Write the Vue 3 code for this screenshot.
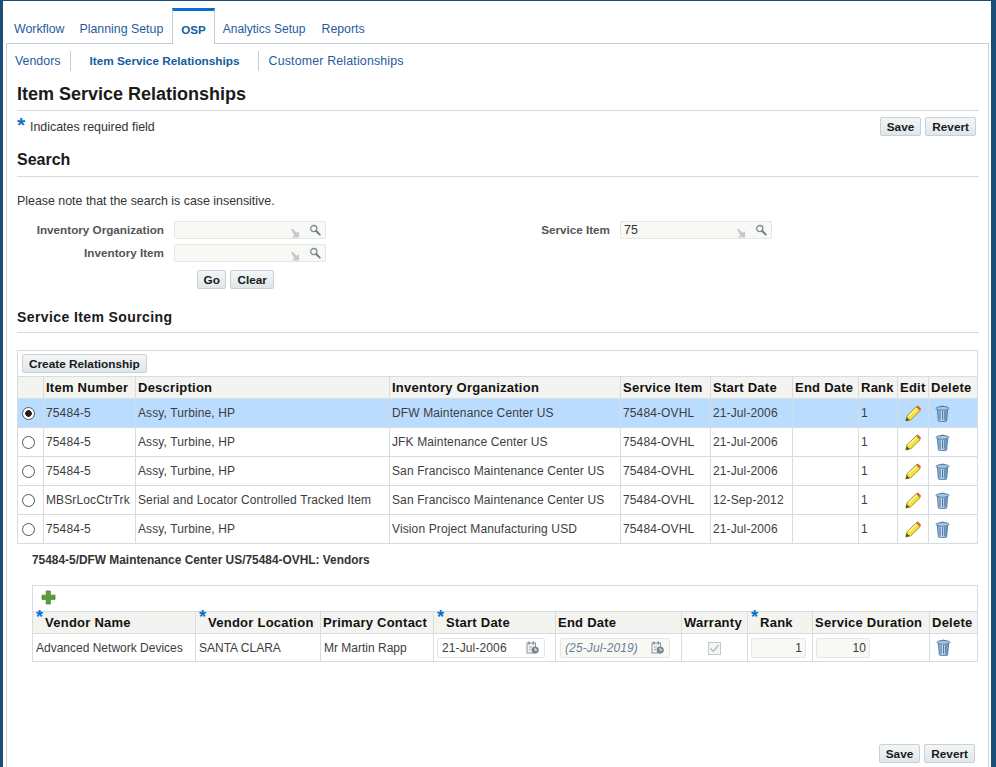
<script setup>
const tabs = [
  { label: 'Workflow' },
  { label: 'Planning Setup' },
  { label: 'OSP', active: true },
  { label: 'Analytics Setup' },
  { label: 'Reports' }
]
const subs = [
  { label: 'Vendors', cls: 'sub-a' },
  { label: 'Item Service Relationships', cls: 'sub-b' },
  { label: 'Customer Relationships', cls: 'sub-c' }
]
const cols1 = [26, 92, 254, 231, 90, 82, 66, 39, 31, 49]
const heads1 = ['', 'Item Number', 'Description', 'Inventory Organization', 'Service Item', 'Start Date', 'End Date', 'Rank', 'Edit', 'Delete']
const rows1 = [
  ['75484-5', 'Assy, Turbine, HP', 'DFW Maintenance Center US', '21-Jul-2006', true],
  ['75484-5', 'Assy, Turbine, HP', 'JFK Maintenance Center US', '21-Jul-2006', false],
  ['75484-5', 'Assy, Turbine, HP', 'San Francisco Maintenance Center US', '21-Jul-2006', false],
  ['MBSrLocCtrTrk', 'Serial and Locator Controlled Tracked Item', 'San Francisco Maintenance Center US', '12-Sep-2012', false],
  ['75484-5', 'Assy, Turbine, HP', 'Vision Project Manufacturing USD', '21-Jul-2006', false]
]
const cols2 = [163, 125, 113, 122, 126, 66, 65, 117, 48]
</script>

<template>
  <div class="page">
    <svg class="defs" width="0" height="0" aria-hidden="true">
      <defs>
        <linearGradient id="cyl" x1="0" x2="1" y1="0" y2="0">
          <stop offset="0" stop-color="#7fa6cc" />
          <stop offset=".45" stop-color="#d3e4f3" />
          <stop offset="1" stop-color="#5f8ab5" />
        </linearGradient>
        <symbol id="pencil" viewBox="0 0 16 17">
          <path d="M.8 16 2 10.8 11.2 1.8 15.2 5.6 5.8 14.8Z" fill="#f7e23c" stroke="#8f7a12" stroke-width=".8" stroke-linejoin="round" />
          <path d="M3.4 11 12 3" stroke="#fff8a8" stroke-width="1.4" fill="none" />
          <path d="M.8 16 1.7 12.2 4.6 15Z" fill="#4c4a3e" />
          <path d="M11.2 1.8 12.8 .5 16 3.8 15.2 5.6Z" fill="#e0532f" />
        </symbol>
        <symbol id="trash" viewBox="0 0 15 17">
          <path d="M2.4 4.5 3.3 15.6Q3.4 16.4 4.2 16.4H10.8Q11.6 16.4 11.7 15.6L12.6 4.5Z" fill="url(#cyl)" stroke="#3f6d9b" stroke-width=".8" />
          <path d="M5.1 6.2V14.8M7.5 6.2V14.8M9.9 6.2V14.8" stroke="#3f6d9b" stroke-width=".9" />
          <ellipse cx="7.5" cy="3.4" rx="6.4" ry="1.9" fill="#a9c6e0" stroke="#3f6d9b" stroke-width=".8" />
          <path d="M5.6 1.7Q7.5 .2 9.4 1.7" fill="none" stroke="#3f6d9b" stroke-width=".8" />
        </symbol>
        <symbol id="mag" viewBox="0 0 12 12">
          <circle cx="4.8" cy="4.6" r="3.1" fill="#f4f7f9" stroke="#7f8c95" stroke-width="1.3" />
          <path d="M7.2 7 10.8 10.6" stroke="#6f7c85" stroke-width="1.9" stroke-linecap="round" />
        </symbol>
        <symbol id="lov" viewBox="0 0 10 10">
          <path d="M1 1.5 2.4 .5 7 5 8 3.5 9 3.5 9 9.5 2.5 9.5 2.5 8.5 4.5 7.5Z" fill="#c3c9cc" />
        </symbol>
        <symbol id="cal" viewBox="0 0 13 13">
          <rect x="1" y="2" width="8.5" height="10" fill="#eef0f1" stroke="#8f989e" />
          <path d="M3 .5V3.5M7.4 .5V3.5" stroke="#6f7a82" stroke-width="1.2" />
          <path d="M3 6H6M3 8.5H5" stroke="#a5adb2" />
          <circle cx="9.2" cy="9" r="3.6" fill="#7b878f" />
          <path d="M9.2 7.2V9.2H11" stroke="#fff" fill="none" />
        </symbol>
      </defs>
    </svg>

    <div class="shell">
      <nav class="tabs">
        <a v-for="t in tabs" :key="t.label" class="tab" :class="{ on: t.active }">{{ t.label }}</a>
      </nav>

      <main class="panel">
        <nav class="subnav">
          <a v-for="s in subs" :key="s.label" :class="s.cls">{{ s.label }}</a>
        </nav>

        <h1>Item Service Relationships</h1>

        <div class="req-row">
          <p class="req"><span class="star">*</span><span>Indicates required field</span></p>
          <div class="btns">
            <button>Save</button>
            <button>Revert</button>
          </div>
        </div>

        <h2>Search</h2>
        <p class="note">Please note that the search is case insensitive.</p>

        <div class="form">
          <div class="form-col">
            <div class="field">
              <label>Inventory Organization</label>
              <div class="lov">
                <span></span>
                <svg class="i-lov"><use href="#lov" /></svg>
                <svg class="i-mag"><use href="#mag" /></svg>
              </div>
            </div>
            <div class="field">
              <label>Inventory Item</label>
              <div class="lov">
                <span></span>
                <svg class="i-lov"><use href="#lov" /></svg>
                <svg class="i-mag"><use href="#mag" /></svg>
              </div>
            </div>
            <div class="form-btns">
              <button class="go">Go</button>
              <button>Clear</button>
            </div>
          </div>
          <div class="form-col second">
            <div class="field">
              <label class="short">Service Item</label>
              <div class="lov">
                <span>75</span>
                <svg class="i-lov"><use href="#lov" /></svg>
                <svg class="i-mag"><use href="#mag" /></svg>
              </div>
            </div>
          </div>
        </div>

        <h3>Service Item Sourcing</h3>

        <div class="tbl-box">
          <div class="toolbar"><button>Create Relationship</button></div>
          <table>
            <colgroup>
              <col v-for="(c, i) in cols1" :key="i" :style="{ width: c + 'px' }" />
            </colgroup>
            <thead>
              <tr><th v-for="(h, i) in heads1" :key="i">{{ h }}</th></tr>
            </thead>
            <tbody>
              <tr v-for="(r, i) in rows1" :key="i" :class="{ sel: r[4] }">
                <td class="c-radio"><span class="radio" :class="{ checked: r[4] }"></span></td>
                <td>{{ r[0] }}</td>
                <td>{{ r[1] }}</td>
                <td>{{ r[2] }}</td>
                <td>75484-OVHL</td>
                <td>{{ r[3] }}</td>
                <td></td>
                <td>1</td>
                <td class="c"><svg class="i-pencil"><use href="#pencil" /></svg></td>
                <td class="c-del"><svg class="i-trash"><use href="#trash" /></svg></td>
              </tr>
            </tbody>
          </table>
        </div>

        <h4>75484-5/DFW Maintenance Center US/75484-OVHL: Vendors</h4>

        <div class="tbl-box sub">
          <div class="toolbar plus">
            <svg width="15" height="15" viewBox="0 0 16 16"><path d="M5.5 1H10V5.5H15V10H10V15H5.5V10H1V5.5H5.5Z" fill="#5a9e3c" stroke="#3f7f2a" stroke-width=".7" /></svg>
          </div>
          <table class="t2">
            <colgroup>
              <col v-for="(c, i) in cols2" :key="i" :style="{ width: c + 'px' }" />
            </colgroup>
            <thead>
              <tr>
                <th><span class="hstar">*</span>Vendor Name</th>
                <th><span class="hstar">*</span>Vendor Location</th>
                <th>Primary Contact</th>
                <th><span class="hstar">*</span>Start Date</th>
                <th>End Date</th>
                <th>Warranty</th>
                <th><span class="hstar">*</span>Rank</th>
                <th>Service Duration</th>
                <th>Delete</th>
              </tr>
            </thead>
            <tbody>
              <tr>
                <td>Advanced Network Devices</td>
                <td>SANTA CLARA</td>
                <td>Mr Martin Rapp</td>
                <td><div class="date"><span>21-Jul-2006</span><svg class="i-cal"><use href="#cal" /></svg></div></td>
                <td><div class="date dis"><span>(25-Jul-2019)</span><svg class="i-cal"><use href="#cal" /></svg></div></td>
                <td class="c">
                  <svg width="13" height="13" viewBox="0 0 13 13" class="chk"><rect x=".5" y=".5" width="12" height="12" fill="#f4f5f5" stroke="#c3c9cc" /><path d="M2.5 6.5 5.3 9.5 10.5 3" fill="none" stroke="#b4bbbf" stroke-width="1.3" /></svg>
                </td>
                <td><div class="num w-rank">1</div></td>
                <td><div class="num w-dur">10</div></td>
                <td class="c-del"><svg class="i-trash"><use href="#trash" /></svg></td>
              </tr>
            </tbody>
          </table>
        </div>

        <div class="foot btns">
          <button>Save</button>
          <button>Revert</button>
        </div>
      </main>
    </div>
  </div>
</template>

<style scoped>
.page {
  width: 996px;
  height: 767px;
  box-sizing: border-box;
  padding: 1px 5px 0 3px;
  background: #1b4f78;
  overflow: hidden;
  font-family: "Liberation Sans", Arial, sans-serif;
  font-size: 12.4px;
  color: #333;
}
.defs { position: absolute; }
.shell {
  background: #fff;
  height: 766px;
  padding: 7px 2px 0 3px;
  box-sizing: border-box;
}
.tabs { display: flex; height: 35px; font-size: 12.35px; }
.tab {
  padding: 14px 8px 0;
  color: #1f5c9e;
  line-height: 14px;
  box-sizing: border-box;
  position: relative;
}
.tab:first-child { padding-right: 7px; }
.tab:nth-child(2) { padding-right: 9px; }
.tab.on {
  font-weight: bold;
  font-size: 11.6px;
  color: #145c9e;
  border: 1px solid #c5ced4;
  border-top: 3px solid #0572ce;
  border-bottom: 0;
  height: 36px;
  padding: 12px 8px 0;
  background: #fff;
  z-index: 1;
}
.tab.on + .tab { font-size: 12px; }
.panel {
  border: 1px solid #c5ced4;
  border-bottom: 0;
  height: 724px;
  padding: 0 9px 0 10px;
  box-sizing: border-box;
}
.subnav { display: flex; height: 31px; align-items: flex-start; color: #1f5c9e; margin-left: -2px; }
.subnav a { line-height: 20px; height: 20px; margin-top: 7px; }
.sub-a { padding-right: 10px; border-right: 1px solid #c5ced4; }
.sub-b { padding: 0 18px; border-right: 1px solid #c5ced4; font-weight: bold; color: #145c9e; font-size: 11.8px; }
.sub-c { padding-left: 10px; letter-spacing: .16px; }
h1 {
  margin: 8px 0 0;
  font-size: 18px;
  line-height: 23px;
  height: 27px;
  color: #1a1a1a;
  border-bottom: 1px solid #d6dcdf;
}
.req-row { display: flex; justify-content: space-between; height: 39px; }
.req { margin: 4px 0 0; display: flex; }
.star { color: #0572ce; font-size: 21px; line-height: 20px; font-weight: bold; width: 13px; }
.req span:last-child { margin-top: 5px; line-height: 14px; }
.btns { display: flex; gap: 4px; padding: 6px 3px 0 0; }
button {
  font: bold 11.8px "Liberation Sans", Arial, sans-serif;
  color: #1a1a1a;
  height: 19px;
  padding: 0 6px;
  border: 1px solid #c9d1d6;
  border-radius: 2px;
  background: linear-gradient(#f4f6f7, #dfe6ea);
}
button.go { padding: 0 5.5px; }
h2 {
  margin: 0;
  font-size: 16px;
  line-height: 20px;
  height: 26px;
  color: #1a1a1a;
  border-bottom: 1px solid #d6dcdf;
}
.note { margin: 17px 0 0; line-height: 14px; }
.form { display: flex; margin-top: 13px; height: 76px; }
.form-col { flex: none; width: 523px; }
.form-col.second { width: 232px; }
.field { display: flex; align-items: center; height: 18px; margin-bottom: 5px; }
.field label {
  width: 147px;
  flex: none;
  text-align: right;
  font-weight: bold;
  color: #555;
  margin: -2px 10px 0 0;
  font-size: 11.7px;
  white-space: nowrap;
}
.field label.short { width: 70px; }
.lov {
  width: 152px;
  height: 18px;
  flex: none;
  box-sizing: border-box;
  border: 1px solid #e3e7e9;
  border-radius: 2px;
  background: #f8f8f4;
  display: flex;
  align-items: center;
  position: relative;
  padding-left: 3px;
}
.lov span { line-height: 16px; }
.i-lov { position: absolute; left: 115px; top: 6px; width: 10px; height: 10px; }
.i-mag { position: absolute; left: 134px; top: 2px; width: 12px; height: 12px; }
.form-btns { display: flex; gap: 4px; margin: 8px 0 0 180px; }
h3 {
  margin: 12px 0 0;
  font-size: 14px;
  line-height: 16px;
  height: 23px;
  color: #1a1a1a;
  border-bottom: 1px solid #d6dcdf;
  letter-spacing: .4px;
}
.tbl-box { margin-top: 17px; border: 1px solid #d6dcdf; border-bottom: 0; width: 961px; box-sizing: border-box; }
.toolbar { height: 25px; padding: 3px 0 0 4px; box-sizing: border-box; }
table { border-collapse: collapse; table-layout: fixed; width: 960px; margin-left: -1px; }
th, td {
  border: 1px solid #d6dcdf;
  padding: 0 2px;
  text-align: left;
  white-space: nowrap;
}
th {
  height: 21px;
  background: #f3f3ef;
  font-size: 13px;
  font-weight: bold;
  color: #111;
  letter-spacing: .25px;
}
td { height: 28px; font-size: 12px; letter-spacing: .12px; color: #3d3d3d; }
tr.sel td { background: #b9dcff; }
td.c { text-align: center; padding: 0; }
td.c-radio { padding: 0 0 0 4px; }
td.c-del { padding: 0 0 0 6px; }
.radio {
  display: inline-block;
  width: 13px;
  height: 13px;
  box-sizing: border-box;
  border: 1px solid #555;
  border-radius: 50%;
  background: #fff;
  vertical-align: middle;
}
.radio.checked { background: radial-gradient(circle, #222 0 3px, #fff 3.6px); }
.i-pencil { width: 16px; height: 17px; vertical-align: middle; }
.i-trash { width: 15px; height: 17px; vertical-align: middle; }
h4 {
  margin: 9px 0 0 15px;
  font-size: 11.9px;
  line-height: 14px;
  color: #333;
}
.tbl-box.sub { margin: 18px 0 0 15px; width: 946px; }
.plus { padding: 4px 0 0 8px; }
.t2 { width: 945px; }
.t2 td { height: 27px; padding-left: 3px; letter-spacing: 0; }
.t2 th { height: 21px; }
.t2 td.c { padding: 0; }
.t2 td.c-del { padding: 0 0 0 6px; }
.hstar {
  color: #0572ce;
  font-size: 18px;
  line-height: 0;
  vertical-align: 4px;
  margin: 0 2px 0 1px;
  letter-spacing: 0;
}
.date, .num {
  height: 20px;
  box-sizing: border-box;
  border: 1px solid #e3e7e9;
  border-radius: 2px;
  display: flex;
  align-items: center;
  letter-spacing: .12px;
}
.date {
  width: 108px;
  padding: 0 5px 0 4px;
  justify-content: space-between;
  background: #fff;
}
.date.dis { width: 110px; margin-left: 1px; color: #6f7f96; font-style: italic; background: #f8f8f5; }
.i-cal { width: 13px; height: 13px; }
.num { justify-content: flex-end; padding-right: 3px; background: #f8f8f4; }
.w-rank { width: 55px; }
.w-dur { width: 54px; }
.chk { vertical-align: middle; }
.foot { justify-content: flex-end; margin-top: 82px; padding: 0 4px 0 0; }
</style>
